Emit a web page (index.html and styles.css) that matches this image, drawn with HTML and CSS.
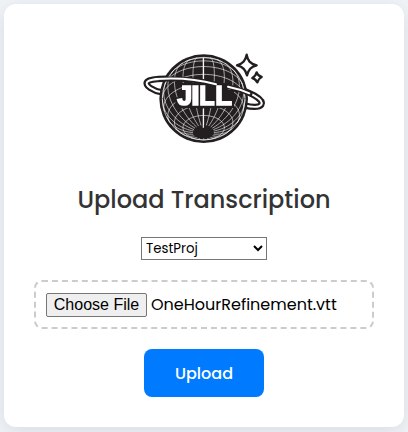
FILE: index.html
```html
<!DOCTYPE html>
<html lang="en">
<head>
<meta charset="utf-8">
<title>Upload Transcription</title>
<link rel="stylesheet" href="styles.css">
</head>
<body>
<main class="card">
  <svg class="logo" viewBox="0 0 420 318" role="img" aria-label="JILL">
    <g class="ring-back">
      <path d="M84 145C58 141 30 124 40 113C51 103 110 103 165 108"/>
      <path d="M300 132C345 142 391 166 382 182C374 192 355 190 330 184"/>
    </g>
    <g class="ring-line">
      <path d="M84 145C58 141 30 124 40 113C51 103 110 103 165 108"/>
      <path d="M300 132C345 142 391 166 382 182C374 192 355 190 330 184"/>
    </g>
    <circle class="globe" cx="209" cy="164" r="133"/>
    <circle class="rim" cx="209" cy="164" r="124"/>
    <path id="graticule" class="grid"/>
    <path class="meridian" d="M208 42V106M208 194V252"/>
    <ellipse class="globe" cx="208" cy="267" rx="32" ry="16"/>
    <path class="globe" d="M144 117H280V138H300V192H124V160H144Z"/>
    <g class="ring-shadow">
      <path d="M80 105C140 104 200 108 246 121"/>
      <path d="M282 128C307 133 328 140 348 149"/>
    </g>
    <g class="ring-front">
      <path d="M64 105C130 100 200 108 246 121"/>
      <path d="M282 128C307 133 328 140 346 148"/>
    </g>
    <g class="wordmark">
      <text x="130" y="184" textLength="45" lengthAdjust="spacingAndGlyphs">J</text>
      <text x="172" y="184" textLength="25" lengthAdjust="spacingAndGlyphs">I</text>
      <text x="196" y="184" textLength="46" lengthAdjust="spacingAndGlyphs">L</text>
      <text x="244" y="184" textLength="50" lengthAdjust="spacingAndGlyphs">L</text>
    </g>
    <path class="star" d="M338 32C341 50 348 59 368 64C350 69 344 77 339 94C334 77 328 69 309 64C328 58 334 50 338 32Z"/>
    <path class="star" d="M368 85C370 93 375 97 383 99C375 103 372 108 370 115C366 108 363 104 355 102C363 98 366 93 368 85Z"/>
  </svg>
  <h1 class="title">Upload Transcription</h1>
  <select class="project"><option>TestProj</option></select>
  <div class="file">
    <button class="choose" type="button">Choose File</button>
    <span class="filename">OneHourRefinement.vtt</span>
  </div>
  <button class="upload" type="button">Upload</button>
</main>
<script src="graticule.js"></script>
</body>
</html>
```
FILE: styles.css
```css
* { box-sizing: border-box; }
body {
  margin: 0;
  padding: 4px;
  height: 432px;
  overflow: hidden;
  background: #f0f4f8;
  font-family: Poppins, Inter, sans-serif;
}
.card {
  display: flex;
  flex-direction: column;
  align-items: center;
  width: 400px;
  height: 423px;
  padding: 40px 30px 30px;
  background: #fff;
  border-radius: 12px;
  box-shadow: 0 4px 20px rgba(0, 0, 0, .1);
}
.logo { width: 140px; height: 106px; flex: none; will-change: transform; }
.globe { fill: #231f20; }
.rim { fill: none; stroke: #fff; stroke-width: 2; }
.grid { fill: none; stroke: #fff; stroke-width: 2; opacity: .9; }
.meridian { stroke: #fff; stroke-width: 3.5; }
.ring-back, .ring-line, .ring-front, .ring-shadow { fill: none; stroke-linecap: round; }
.ring-back { stroke: #231f20; stroke-width: 19; }
.ring-line { stroke: #fff; stroke-width: 6; }
.ring-shadow { stroke: #231f20; stroke-width: 15; }
.ring-front { stroke: #fff; stroke-width: 6; }
.star { fill: #fff; stroke: #231f20; stroke-width: 7; stroke-linejoin: round; }
.wordmark {
  font: 700 82px "Liberation Sans", sans-serif;
  fill: #fff;
  stroke: #fff;
  stroke-width: 5;
}
.title {
  margin: 32px 0 0;
  height: 36px;
  line-height: 36px;
  font-size: 24px;
  font-weight: 500;
  color: #333;
  white-space: nowrap;
}
.project {
  width: 126px;
  height: 23px;
  margin-top: 19px;
  padding: 0;
  border: 1px solid #767676;
  border-radius: 0;
  background-color: #fff;
  color: #000;
  font: 13.333px Poppins, Inter, sans-serif;
}
.file {
  display: flex;
  align-items: center;
  width: 340px;
  height: 49px;
  margin-top: 20px;
  padding: 0 10px;
  border: 2px dashed #ccc;
  border-radius: 8px;
}
.choose {
  width: 101px;
  height: 24px;
  padding: 0;
  border: 1px solid #767676;
  border-radius: 2px;
  background: #efefef;
  color: #000;
  font: 16px "Liberation Sans", sans-serif;
}
.filename { margin-left: 4px; font-size: 16px; color: #000; white-space: nowrap; }
.upload {
  width: 120px;
  height: 48px;
  margin-top: 20px;
  border: 0;
  border-radius: 8px;
  background: #007bff;
  color: #fff;
  font: 500 16px Poppins, Inter, sans-serif;
}
```
FILE: graticule.js
```js
// Orthographic graticule of the globe, tilted so the south pole faces forward.
(function () {
  var cx = 209, cy = 164, r = 124, rad = Math.PI / 180, tilt = 36 * rad, d = "";
  function trace(points) {
    var pen = false;
    points.forEach(function (p) {
      var lat = p[0] * rad, lon = p[1] * rad;
      var x = Math.cos(lat) * Math.sin(lon);
      var f = Math.cos(lat) * Math.cos(lon);
      var y = Math.sin(lat) * Math.cos(tilt) + f * Math.sin(tilt);
      var z = f * Math.cos(tilt) - Math.sin(lat) * Math.sin(tilt);
      if (z < 0) { pen = false; return; }
      d += (pen ? "L" : "M") + (cx + r * x).toFixed(1) + " " + (cy - r * y).toFixed(1);
      pen = true;
    });
  }
  var a, b, line;
  for (a = -60; a <= 45; a += 15) {
    for (line = [], b = -180; b <= 180; b += 4) line.push([a, b]);
    trace(line);
  }
  for (a = -180; a < 180; a += 15) {
    for (line = [], b = -76; b <= 80; b += 3) line.push([b, a]);
    trace(line);
  }
  document.getElementById("graticule").setAttribute("d", d);
})();
```
